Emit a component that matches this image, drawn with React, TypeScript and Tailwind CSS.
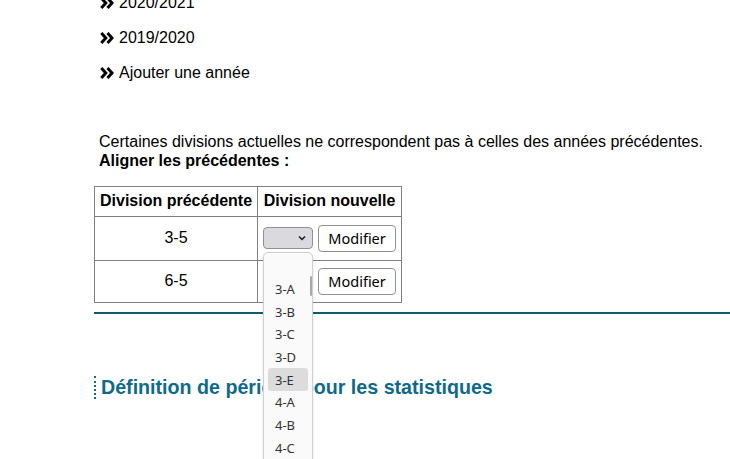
import React from "react";

const years = ["2020/2021", "2019/2020", "Ajouter une année"];
const rows = ["3-5", "6-5"];
const options = ["", "3-A", "3-B", "3-C", "3-D", "3-E", "4-A", "4-B", "4-C", "4-D"];

function Chevrons() {
  return (
    <svg width="14" height="12" viewBox="0 0 14 12" className="shrink-0">
      <path d="M1.3 1.1 L5.8 6 L1.3 10.9" fill="none" stroke="#000" strokeWidth="3" strokeLinejoin="miter" />
      <path d="M7.5 1.1 L12 6 L7.5 10.9" fill="none" stroke="#000" strokeWidth="3" strokeLinejoin="miter" />
    </svg>
  );
}

function FakeSelect() {
  return (
    <div className="flex h-[22px] w-[50px] items-center justify-end rounded-[4px] border border-[#8f8f9d] bg-[#d9d9de] pr-[6px]">
      <svg width="8" height="6" viewBox="0 0 8 6">
        <path d="M1 1.5 L4 4.5 L7 1.5" fill="none" stroke="#1a1a1a" strokeWidth="1.5" />
      </svg>
    </div>
  );
}

function ModifierButton() {
  return (
    <button className="h-[27px] w-[78px] rounded-[4px] border border-[#8f8f9d] bg-white text-[14.5px] text-black [font-family:'Noto_Sans',sans-serif]">
      Modifier
    </button>
  );
}

export default function App() {
  return (
    <div className="relative h-[459px] w-[730px] overflow-hidden bg-white text-[16px] leading-[18.4px] text-black [font-family:'Liberation_Sans',Arial,sans-serif]">
      <div className="pl-[94px]">
        {/* année list */}
        <ul className="-mt-[6px] flex flex-col gap-[16.6px] pl-[6px]">
          {years.map((y) => (
            <li key={y} className="flex items-center gap-[5px]">
              <Chevrons />
              <span>{y}</span>
            </li>
          ))}
        </ul>

        <p className="mt-[51px] pl-[5px]">
          Certaines divisions actuelles ne correspondent pas à celles des années précédentes.
          <br />
          <b>Aligner les précédentes :</b>
        </p>

        <table className="mt-[16px] border-collapse">
          <thead>
            <tr>
              <th className="border border-[#808080] px-[5px] py-[5px] text-center font-bold">Division précédente</th>
              <th className="border border-[#808080] px-[5px] py-[5px] text-center font-bold">Division nouvelle</th>
            </tr>
          </thead>
          <tbody>
            {rows.map((r, i) => (
              <tr key={r}>
                <td className={`border border-[#808080] text-center align-middle ${i === 0 ? "h-[44px]" : "h-[42px]"}`}>{r}</td>
                <td className="border border-[#808080] px-[5px] align-middle">
                  <div className="flex items-center gap-[5px]">
                    <FakeSelect />
                    <ModifierButton />
                  </div>
                </td>
              </tr>
            ))}
          </tbody>
        </table>

        <div className="mt-[9px] h-[2px] bg-[#0b5d6e]" />

        <h2 className="mt-[62px] border-l-2 border-dotted border-[#0e6a8a] pl-[5px] text-[19.65px] font-bold leading-[23px] text-[#0e6a8a]">
          Définition de période pour les statistiques
        </h2>
      </div>

      {/* open select popup */}
      <div className="absolute left-[263px] top-[252px] w-[50px] rounded-t-[5px] border border-[#d0d0d0] bg-[#fafafa] px-[4px] pt-[2px] text-[13px] text-[#333] shadow-sm [font-family:'Noto_Sans',sans-serif]">
        {options.map((o, i) => (
          <div
            key={i}
            className={`flex h-[22.7px] items-center rounded-[3px] px-[7px] ${o === "3-E" ? "bg-[#dcdcdc]" : ""}`}
          >
            {o}
          </div>
        ))}
        <div className="absolute right-[0px] top-[23px] h-[20px] w-[2px] rounded bg-[#a8a8a8]" />
      </div>
    </div>
  );
}
